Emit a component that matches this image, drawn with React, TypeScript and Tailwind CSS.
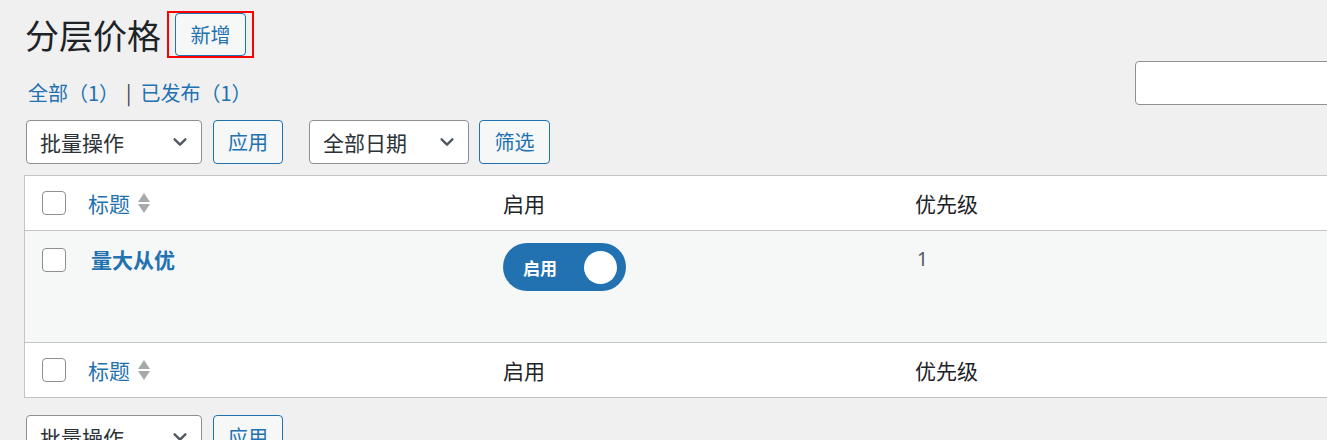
import React from "react";

const font = { fontFamily: '"Noto Sans CJK SC", "Noto Sans", sans-serif' };

function Chevron() {
  return (
    <svg width="18" height="18" viewBox="0 0 20 20" className="text-[#50575e]">
      <path d="M4 7 L10 13 L16 7" fill="none" stroke="currentColor" strokeWidth="2.6" strokeLinecap="round" strokeLinejoin="round" />
    </svg>
  );
}

function Select({ label, w }: { label: string; w: string }) {
  return (
    <div className={`${w} h-[44px] bg-white border border-[#8c8f94] rounded-[4px] flex items-center justify-between pl-[13px] pr-[12px] text-[21px] text-[#2c3338]`}>
      <span className="leading-none">{label}</span>
      <Chevron />
    </div>
  );
}

function Btn({ label, w }: { label: string; w: string }) {
  return (
    <div className={`${w} h-[44px] bg-[#f6f7f7] border border-[#2271b1] rounded-[4px] flex items-center justify-center text-[20px] text-[#2271b1]`}>
      <span className="leading-none">{label}</span>
    </div>
  );
}

function Checkbox() {
  return <div className="w-[24px] h-[24px] bg-white border border-[#8c8f94] rounded-[4px] shrink-0" />;
}

function SortArrows() {
  return (
    <svg width="14" height="22" viewBox="0 0 14 22" className="ml-[7px]">
      <path d="M7 1 L13 10 L1 10 Z" fill="#a7aaad" />
      <path d="M1 12 L13 12 L7 21 Z" fill="#a7aaad" />
    </svg>
  );
}

function HeaderRow({ top }: { top: boolean }) {
  return (
    <div className={`flex items-center h-[55px] bg-white ${top ? "border-b" : "border-t"} border-[#c3c4c7]`}>
      <div className="w-[63px] pl-[17px] flex items-center">
        <Checkbox />
      </div>
      <div className="w-[415px] flex items-center">
        <span className="text-[21px] text-[#2271b1] leading-none">标题</span>
        <SortArrows />
      </div>
      <div className="w-[412px] text-[21px] text-[#1d2327] leading-none">启用</div>
      <div className="flex-1 text-[21px] text-[#1d2327] leading-none">优先级</div>
    </div>
  );
}

export default function App() {
  return (
    <div className="w-[1327px] h-[440px] overflow-hidden bg-[#f0f0f1]" style={font}>
      <div className="w-[1400px] pl-[24px]">
        {/* Title row */}
        <div className="flex items-center pt-[11px]">
          <h1 className="text-[34px] leading-[47px] text-[#1d2327] font-normal ml-[1px]">分层价格</h1>
          <div className="ml-[6px] border-2 border-[#ff0000] px-[6px] h-[47px] flex items-center">
            <div className="w-[71px] h-[43px] bg-[#f6f7f7] border border-[#2271b1] rounded-[4px] flex items-center justify-center text-[20px] text-[#2271b1]">
              <span className="leading-none">新增</span>
            </div>
          </div>
        </div>

        {/* Subsubsub + search */}
        <div className="flex items-start justify-between mt-[3px] w-[1303px]">
          <div className="pt-[19px] flex items-center text-[20px] leading-[26px] ml-[4px]">
            <span className="text-[#2271b1]">全部（1）</span>
            <span className="text-[#3c434a] ml-[7px] mr-[9px]">|</span>
            <span className="text-[#2271b1]">已发布（1）</span>
          </div>
          <div className="w-[260px] h-[44px] bg-white border border-[#8c8f94] rounded-[4px] -mr-[68px]" />
        </div>

        {/* Toolbar */}
        <div className="flex items-center mt-[14px] ml-[2px]">
          <Select label="批量操作" w="w-[176px]" />
          <div className="ml-[11px]"><Btn label="应用" w="w-[70px]" /></div>
          <div className="ml-[26px]"><Select label="全部日期" w="w-[160px]" /></div>
          <div className="ml-[10px]"><Btn label="筛选" w="w-[71px]" /></div>
        </div>

        {/* Table */}
        <div className="mt-[11px] border border-[#c3c4c7] w-[1360px]">
          <HeaderRow top />
          <div className="flex items-start h-[111px] bg-[#f6f7f7]">
            <div className="w-[63px] pl-[17px] pt-[17px] flex items-center">
              <Checkbox />
            </div>
            <div className="w-[415px] pt-[14px] pl-[3px]">
              <span className="text-[21px] font-bold text-[#2271b1] leading-[28px]">量大从优</span>
            </div>
            <div className="w-[412px] pt-[12px]">
              <div className="w-[123px] h-[48px] rounded-full bg-[#2271b1] flex items-center justify-between pl-[20px] pr-[9px]">
                <span className="text-white font-bold text-[17px] leading-none">启用</span>
                <div className="w-[33px] h-[33px] rounded-full bg-white" />
              </div>
            </div>
            <div className="flex-1 pt-[14px] pl-[2px] text-[19px] leading-[28px] text-[#50575e]" style={{ fontFamily: '"Noto Sans", "Noto Sans CJK SC", sans-serif' }}>1</div>
          </div>
          <HeaderRow top={false} />
        </div>

        {/* Bottom toolbar */}
        <div className="flex items-center mt-[17px] ml-[2px]">
          <Select label="批量操作" w="w-[176px]" />
          <div className="ml-[11px]"><Btn label="应用" w="w-[70px]" /></div>
        </div>
      </div>
    </div>
  );
}
